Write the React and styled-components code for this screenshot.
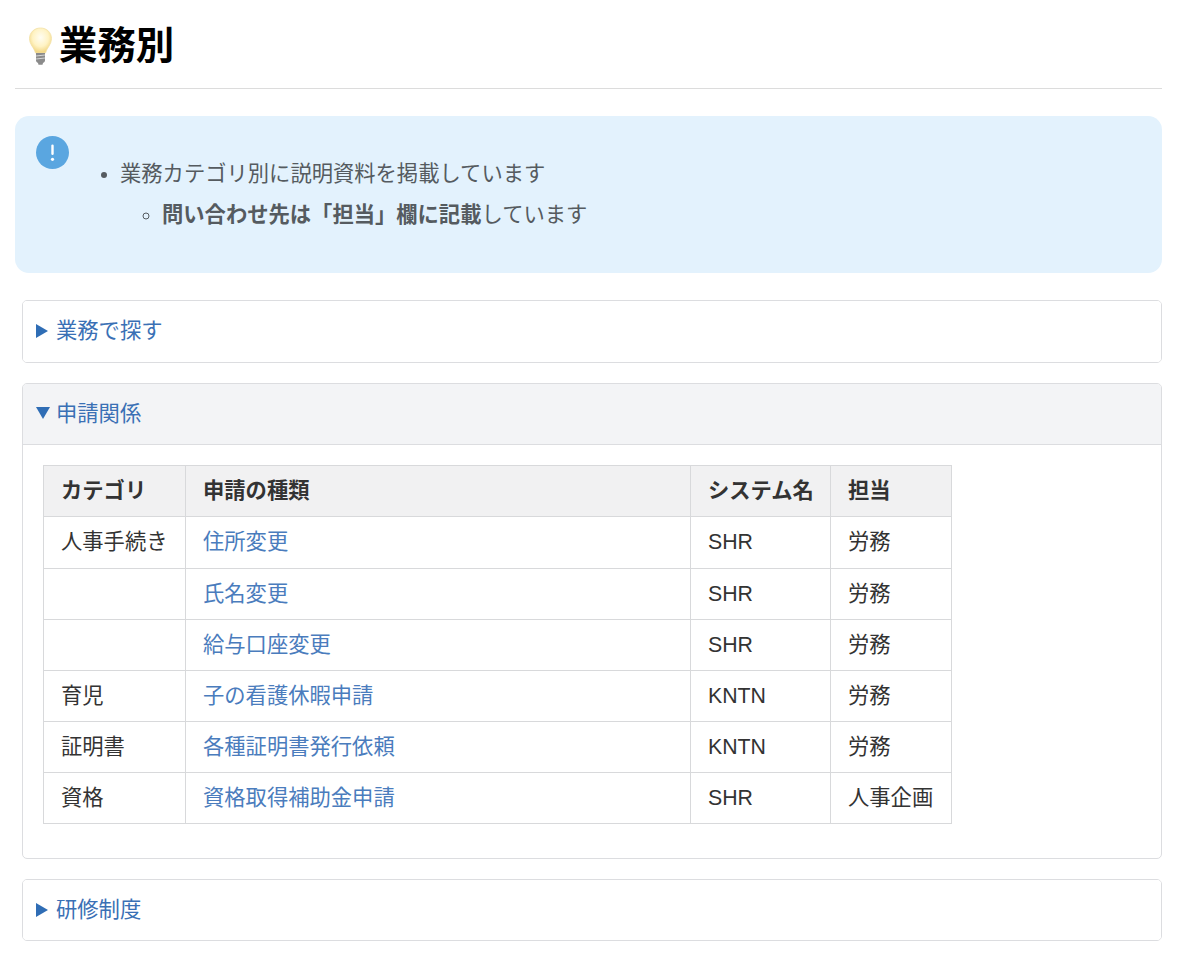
import React from "react";
import styled, { createGlobalStyle } from "styled-components";

const Global = createGlobalStyle`
  html, body { margin: 0; padding: 0; background: #fff; }
  body { font-family: "Liberation Sans", "Noto Sans CJK JP", sans-serif; font-size: 21.3px; color: #333; }
`;
const Page = styled.div`
  width: 1202px; height: 956px; box-sizing: border-box; padding: 0 40px 0 15px; overflow: hidden;
`;
const Title = styled.h1`
  margin: 0; height: 89px; box-sizing: border-box; border-bottom: 1px solid #dcdcdc;
  padding: 22px 0 0 13px; display: flex; align-items: flex-start; gap: 6px;
  font-size: 38.4px; line-height: 48px; font-weight: 700; color: #000;
`;
const Bulb = styled.svg`width: 25px; height: 40px; margin-top: 5px; flex: none;`;
const Callout = styled.div`
  margin-top: 27px; height: 157px; box-sizing: border-box; background: #e3f2fd; border-radius: 14px;
  padding: 20px 21px; display: flex; color: #555b60;
`;
const InfoIcon = styled.svg`width: 33px; height: 33px; flex: none;`;
const Outer = styled.ul`
  margin: 18px 0 0; padding: 0 0 0 51px; list-style: disc; line-height: 40.5px;
`;
const Inner = styled.ul`margin: 0; padding: 0 0 0 42px; list-style: circle;`;
const Panels = styled.div`
  margin: 27px 0 0 7px; display: flex; flex-direction: column; gap: 20px;
`;
const Panel = styled.section`
  border: 1px solid #dcdde0; border-radius: 5px; overflow: hidden; background: #fff;
`;
const Header = styled.div`
  height: ${p => p.$h || 61}px; box-sizing: border-box; display: flex; align-items: center;
  padding: 0 0 ${p => (p.$open ? 5 : p.$h ? 6 : 7)}px 13px;
  gap: ${p => (p.$open ? "6px" : "8px")};
  color: #3a70b5; background: ${p => (p.$open ? "#f3f4f6" : "#fff")};
  border-bottom: ${p => (p.$open ? "1px solid #dcdde0" : "none")};
`;
const Arrow = styled.svg`
  width: ${p => (p.$open ? "14px" : "12px")}; height: 14px; margin-top: ${p => (p.$open ? 3 : 6)}px; flex: none; fill: #2f6db5;
`;
const Body = styled.div`padding: 20px 20px 34px;`;
const Table = styled.table`
  border-collapse: collapse; table-layout: fixed; width: 908px; line-height: 28px;
`;
const Col = styled.col`width: ${p => p.$w}px;`;
const Th = styled.th`
  box-sizing: border-box; background: #f1f1f2; border: 1px solid #d8d9db; height: 51px; padding: 0 17px 1px;
  text-align: left; font-weight: 700; color: #333; white-space: nowrap;
`;
const Td = styled.td`
  box-sizing: border-box; border: 1px solid #d8d9db; height: ${p => p.$h}px; padding: 0 17px 1px; color: #333; white-space: nowrap;
`;
const Link = styled.a`color: #4a7cbd; text-decoration: none;`;

const rows = [
  ["人事手続き", "住所変更", "SHR", "労務", 52],
  ["", "氏名変更", "SHR", "労務", 51],
  ["", "給与口座変更", "SHR", "労務", 51],
  ["育児", "子の看護休暇申請", "KNTN", "労務", 51],
  ["証明書", "各種証明書発行依頼", "KNTN", "労務", 51],
  ["資格", "資格取得補助金申請", "SHR", "人事企画", 51],
];

const Tri = ({ open }) => (
  <Arrow $open={open} viewBox={open ? "0 0 14 14" : "0 0 12 14"}>
    <path d={open ? "M0 1h14L7 13z" : "M0 0l12 7L0 14z"} />
  </Arrow>
);

export default function App() {
  return (
    <Page>
      <Global />
      <Title>
        <Bulb viewBox="0 0 25 40">
          <defs>
            <radialGradient id="g" cx="50%" cy="38%" r="60%">
              <stop offset="0" stopColor="#fffdf2" />
              <stop offset="0.6" stopColor="#fff3c4" />
              <stop offset="1" stopColor="#f2d683" />
            </radialGradient>
          </defs>
          <path d="M12.500 1C6 1 1.500 5.800 1.500 11.500c0 6 4.500 9 6 14.500h10c1.500-5.500 6-8.500 6-14.500C23.500 5.800 19 1 12.500 1z" fill="url(#g)" stroke="#f3e1a6" strokeWidth="0.8" />
          <path d="M8 26h9v7.500c0 1.200-1 2-2 2.500l-.5 1.800h-4L10 36c-1-.5-2-1.300-2-2.500z" fill="#8b8b8b" />
          <path d="M8 29l9-1M8 32l9-1" stroke="#d4d4d4" strokeWidth="1" />
        </Bulb>
        業務別
      </Title>
      <Callout>
        <InfoIcon viewBox="0 0 33 33">
          <circle cx="16.500" cy="16.500" r="16.500" fill="#5aa6e0" />
          <rect x="15.300" y="8.500" width="2.400" height="10.500" rx="1.200" fill="#fff" />
          <circle cx="16.500" cy="23.300" r="1.600" fill="#fff" />
        </InfoIcon>
        <Outer>
          <li>
            業務カテゴリ別に説明資料を掲載しています
            <Inner>
              <li><strong>問い合わせ先は「担当」欄に記載</strong>しています</li>
            </Inner>
          </li>
        </Outer>
      </Callout>
      <Panels>
        <Panel>
          <Header><Tri />業務で探す</Header>
        </Panel>
        <Panel>
          <Header $open><Tri open />申請関係</Header>
          <Body>
            <Table>
              <colgroup>
                <Col $w={142} /><Col $w={505} /><Col $w={140} /><Col $w={121} />
              </colgroup>
              <thead>
                <tr><Th>カテゴリ</Th><Th>申請の種類</Th><Th>システム名</Th><Th>担当</Th></tr>
              </thead>
              <tbody>
                {rows.map(r => (
                  <tr key={r[1]}>
                    <Td $h={r[4]}>{r[0]}</Td>
                    <Td $h={r[4]}><Link href="#">{r[1]}</Link></Td>
                    <Td $h={r[4]}>{r[2]}</Td>
                    <Td $h={r[4]}>{r[3]}</Td>
                  </tr>
                ))}
              </tbody>
            </Table>
          </Body>
        </Panel>
        <Panel>
          <Header $h={60}><Tri />研修制度</Header>
        </Panel>
      </Panels>
    </Page>
  );
}
